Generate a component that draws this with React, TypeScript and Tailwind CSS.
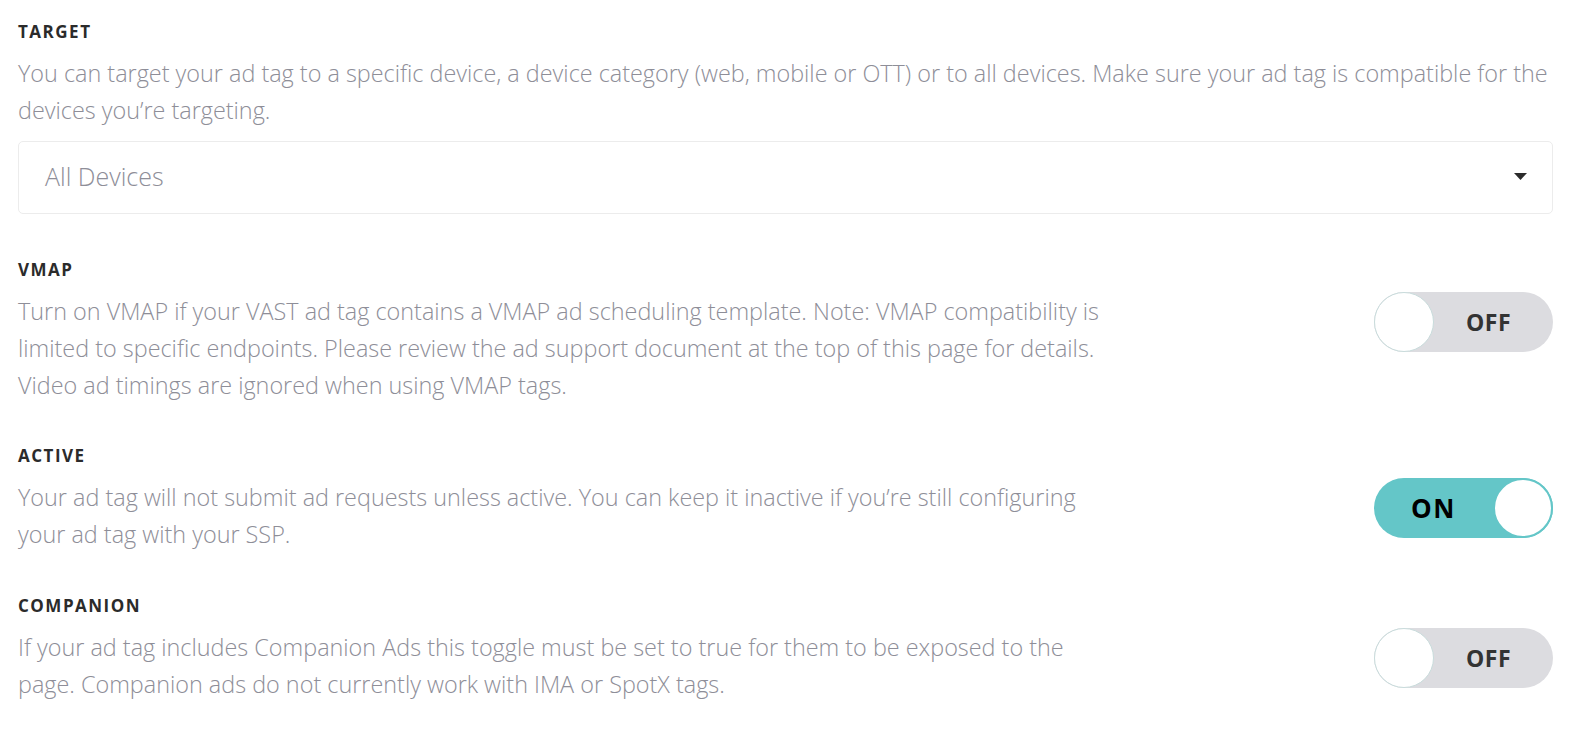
import React from 'react'

function Toggle({ on }: { on: boolean }) {
  if (on) {
    return (
      <div className="flex items-center w-[179px] h-[60px] rounded-full bg-[#64c6c8] shrink-0">
        <span className="flex-1 text-center text-[26px] font-bold tracking-[1.5px] text-black">ON</span>
        <span className="w-[60px] h-[60px] rounded-full bg-white border-2 border-[#64c6c8]" />
      </div>
    )
  }
  return (
    <div className="flex items-center w-[179px] h-[60px] rounded-full bg-[#dcdce0] shrink-0">
      <span className="w-[60px] h-[60px] rounded-full bg-white border border-[#c9dcdc]" />
      <span className="flex-1 pr-[10px] text-center text-[23px] font-bold tracking-[0.5px] text-[#333333]">OFF</span>
    </div>
  )
}

function Heading({ children }: { children: React.ReactNode }) {
  return <h3 className="text-[17px] leading-[22px] font-bold tracking-[1.5px] text-[#2b2b2b]">{children}</h3>
}

const rows = [
  {
    title: 'VMAP',
    text: 'Turn on VMAP if your VAST ad tag contains a VMAP ad scheduling template. Note: VMAP compatibility is limited to specific endpoints. Please review the ad support document at the top of this page for details. Video ad timings are ignored when using VMAP tags.',
    on: false,
    gap: 'mt-[45px]',
  },
  {
    title: 'ACTIVE',
    text: 'Your ad tag will not submit ad requests unless active. You can keep it inactive if you’re still configuring your ad tag with your SSP.',
    on: true,
    gap: 'mt-[41px]',
  },
  {
    title: 'COMPANION',
    text: 'If your ad tag includes Companion Ads this toggle must be set to true for them to be exposed to the page. Companion ads do not currently work with IMA or SpotX tags.',
    on: false,
    gap: 'mt-[42px]',
  },
]

export default function App() {
  return (
    <div className="min-h-screen bg-white pl-[18px] pr-[41px] pt-[21px]" style={{ fontFamily: '"Open Sans", sans-serif' }}>
      {/* Target */}
      <section>
        <Heading>TARGET</Heading>
        <p className="mt-[12px] text-[23.4px] leading-[37px] font-light text-[#8e8e98]">
          You can target your ad tag to a specific device, a device category (web, mobile or OTT) or to all devices. Make sure your ad tag is compatible for the devices you’re targeting.
        </p>
        <div className="mt-[12px] h-[73px] flex items-center justify-between pl-[26px] pr-[25px] pb-[2px] border border-[#ececec] rounded-[5px]">
          <span className="text-[25px] font-light text-[#8e8e98]">All Devices</span>
          <svg width="13" height="7" viewBox="0 0 13 7">
            <path d="M0 0h13L6.5 7z" fill="#2b2b2b" />
          </svg>
        </div>
      </section>

      {rows.map((r) => (
        <section key={r.title} className={r.gap}>
          <Heading>{r.title}</Heading>
          <div className="mt-[12px] flex items-start justify-between">
            <p className="max-w-[1090px] text-[23.4px] leading-[37px] font-light text-[#8e8e98]">{r.text}</p>
            <div className="-mt-[1px]">
              <Toggle on={r.on} />
            </div>
          </div>
        </section>
      ))}
    </div>
  )
}
